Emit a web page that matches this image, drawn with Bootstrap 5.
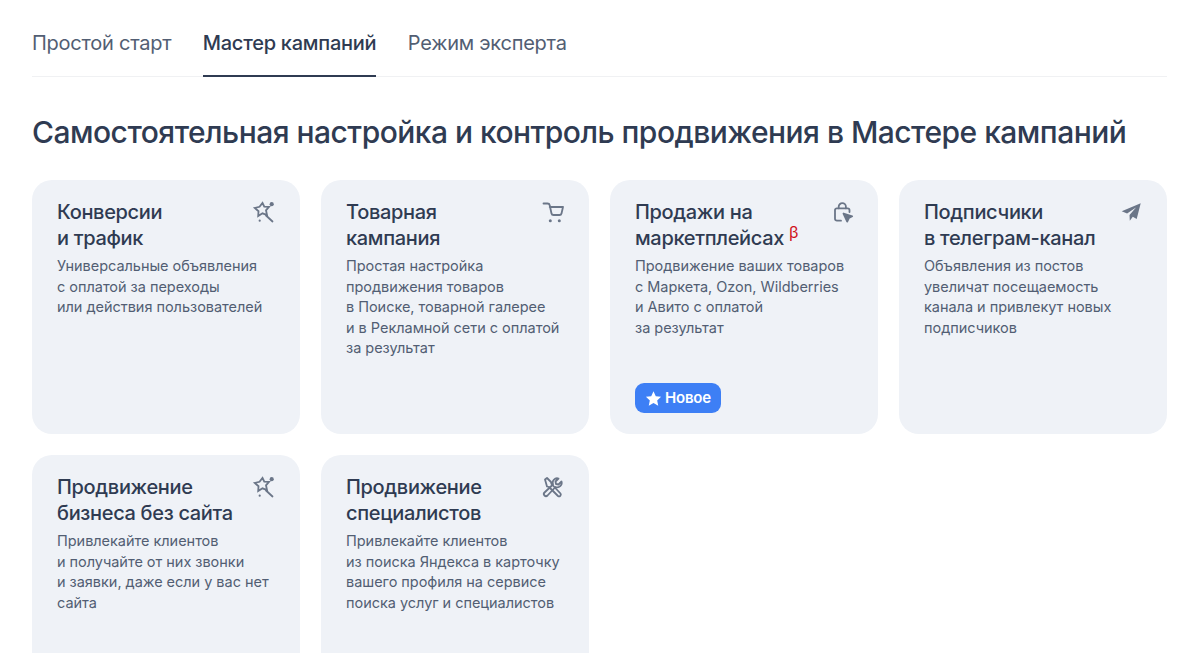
<!DOCTYPE html>
<html lang="ru">
<head>
  <meta charset="UTF-8">
  <title>Мастер кампаний</title>
  <link href="https://cdn.jsdelivr.net/npm/bootstrap@5.3.3/dist/css/bootstrap.min.css" rel="stylesheet">
  <style>
    html, body { height: 653px; overflow: hidden; }
    body { font-family: Inter, "Noto Sans", sans-serif; color: #2f3b52; background: #fff; }
    .page-wrap { padding: 0 33px 0 32px; height: 653px; overflow: hidden; }
    .tabs-bar { height: 77px; border-bottom: 1px solid #f0f1f3; gap: 31.5px; }
    .tab-item { font-size: 20px; line-height: 26px; color: #525e73; padding-top: 30px; height: 77px; text-decoration: none; letter-spacing: -.25px; }
    .tab-item.is-active { color: #2f3b52; font-weight: 500; border-bottom: 2px solid #2f3b52; }
    .page-title { font-size: 30px; line-height: 38px; font-weight: 500; margin: 36px 0 29px; letter-spacing: -.52px; white-space: nowrap; }
    .card-grid { display: grid; grid-template-columns: repeat(4, 1fr); gap: 21px; }
    .camp-card { height: 254px; background: #eff2f7; border-radius: 20px; padding: 19px 25px; position: relative; }
    .camp-title { font-size: 20px; line-height: 26px; font-weight: 500; margin: 0 0 5px; letter-spacing: -.33px; }
    .camp-text { font-size: 14.5px; line-height: 20.5px; color: #525e73; margin: 0; letter-spacing: -.03px; }
    .camp-icon { position: absolute; top: 21px; right: 25px; width: 22px; height: 22px; color: #6b7688; overflow: visible; }
    .beta { color: #d0111b; font-size: 16px; font-weight: 400; vertical-align: 7px; line-height: 0; margin-left: 5px; }
    .new-pill { position: absolute; left: 25px; top: 203px; height: 30px; padding: 0 10px; background: #3d7ff5; color: #fff; border-radius: 9px; font-size: 15px; font-weight: 600; gap: 3px; letter-spacing: -.2px; }
  </style>
</head>
<body>
<div class="page-wrap">
  <nav class="tabs-bar d-flex">
    <a class="tab-item" href="#">Простой старт</a>
    <a class="tab-item is-active" href="#">Мастер кампаний</a>
    <a class="tab-item" href="#">Режим эксперта</a>
  </nav>

  <h1 class="page-title">Самостоятельная настройка и контроль продвижения в Мастере кампаний</h1>

  <div class="card-grid">
    <div class="camp-card">
      <svg class="camp-icon" viewBox="0 0 22 22" fill="none" stroke="currentColor" stroke-width="1.8" stroke-linejoin="miter" stroke-linecap="round"><path d="M9.500 2l1.800 3.600 4.700.2-3 3.500 1 4.700-4.500-1.700-4.300 2.700.3-4.800L1.800 7l4.700-1.200z"/><path d="M13 14.500l6.500 6"/><circle cx="18.700" cy="3.200" r="2.100" fill="currentColor" stroke="none"/><circle cx="6.700" cy="19.700" r="1.100" fill="currentColor" stroke="none"/></svg>
      <h5 class="camp-title">Конверсии<br>и трафик</h5>
      <p class="camp-text">Универсальные объявления<br>с оплатой за переходы<br>или действия пользователей</p>
    </div>
    <div class="camp-card">
      <svg class="camp-icon" viewBox="0 0 22 22" fill="none" stroke="currentColor" stroke-width="1.8" stroke-linejoin="round" stroke-linecap="round"><path d="M1.500 2.500h4c1 0 2 .7 2.200 1.700L9.500 12.500c.2 1 1 1.500 2 1.500h6c1 0 1.800-.6 2-1.500L21 6H7.700"/><circle cx="8.300" cy="19.700" r="1.500" fill="currentColor" stroke="none"/><circle cx="17.300" cy="19.700" r="1.500" fill="currentColor" stroke="none"/></svg>
      <h5 class="camp-title">Товарная<br>кампания</h5>
      <p class="camp-text">Простая настройка<br>продвижения товаров<br>в Поиске, товарной галерее<br>и в Рекламной сети с оплатой<br>за результат</p>
    </div>
    <div class="camp-card">
      <svg class="camp-icon" viewBox="0 0 22 22" fill="none" stroke="currentColor" stroke-width="1.8" stroke-linejoin="round" stroke-linecap="round"><path d="M10 19.700H6c-1.200 0-2-.8-2-2V9c0-1 .8-1.700 1.700-1.700h11c1 0 1.800.7 1.800 1.700v2"/><path d="M7.700 7.300V5.800a3.600 3.600 0 0 1 7.200 0v1.500"/><path d="M12.500 12.500l8.700 2.800-3.300 1.700-1.700 3.500z" fill="currentColor"/></svg>
      <h5 class="camp-title">Продажи на<br>маркетплейсах<span class="beta">β</span></h5>
      <p class="camp-text">Продвижение ваших товаров<br>с Маркета, Ozon, Wildberries<br>и Авито с оплатой<br>за результат</p>
      <span class="new-pill d-inline-flex align-items-center">
        <svg width="17" height="17" viewBox="0 0 24 24" fill="currentColor"><path d="M12 1.800l3.200 6.900 7.500.9-5.500 5.100 1.500 7.400L12 18.400l-6.700 3.700 1.500-7.400-5.500-5.100 7.500-.9z"/></svg>
        Новое
      </span>
    </div>
    <div class="camp-card">
      <svg class="camp-icon" viewBox="0 0 22 22" fill="currentColor"><path d="M20.700 2.300L1.700 10.200l5.400 2.300L16 6.500l-6.500 7.500.3 5.700 3-3.900 3.900 2.300z"/></svg>
      <h5 class="camp-title">Подписчики<br>в телеграм-канал</h5>
      <p class="camp-text">Объявления из постов<br>увеличат посещаемость<br>канала и привлекут новых<br>подписчиков</p>
    </div>
    <div class="camp-card">
      <svg class="camp-icon" viewBox="0 0 22 22" fill="none" stroke="currentColor" stroke-width="1.8" stroke-linejoin="miter" stroke-linecap="round"><path d="M9.500 2l1.800 3.600 4.700.2-3 3.500 1 4.700-4.500-1.700-4.300 2.700.3-4.800L1.800 7l4.700-1.200z"/><path d="M13 14.500l6.500 6"/><circle cx="18.700" cy="3.200" r="2.100" fill="currentColor" stroke="none"/><circle cx="6.700" cy="19.700" r="1.100" fill="currentColor" stroke="none"/></svg>
      <h5 class="camp-title">Продвижение<br>бизнеса без сайта</h5>
      <p class="camp-text">Привлекайте клиентов<br>и получайте от них звонки<br>и заявки, даже если у вас нет<br>сайта</p>
    </div>
    <div class="camp-card">
      <svg class="camp-icon" viewBox="0 0 22 22" fill="none" stroke="currentColor" stroke-width="1.8" stroke-linejoin="round" stroke-linecap="round"><path d="M3 3.500l2-1.500 4 4 .5 2 9 9.500a1.800 1.800 0 0 1-2.500 2.500L7 11 5 10.500z"/><path d="M19.500 5.500l-3 3-2.500-.5-.5-2.500 3-3a4.500 4.500 0 0 0-5.500 6L2.500 16.500a2 2 0 0 0 3 3L13.500 11a4.500 4.500 0 0 0 6-5.500z"/></svg>
      <h5 class="camp-title">Продвижение<br>специалистов</h5>
      <p class="camp-text">Привлекайте клиентов<br>из поиска Яндекса в карточку<br>вашего профиля на сервисе<br>поиска услуг и специалистов</p>
    </div>
  </div>
</div>
<script src="https://cdn.jsdelivr.net/npm/bootstrap@5.3.3/dist/js/bootstrap.bundle.min.js"></script>
</body>
</html>
